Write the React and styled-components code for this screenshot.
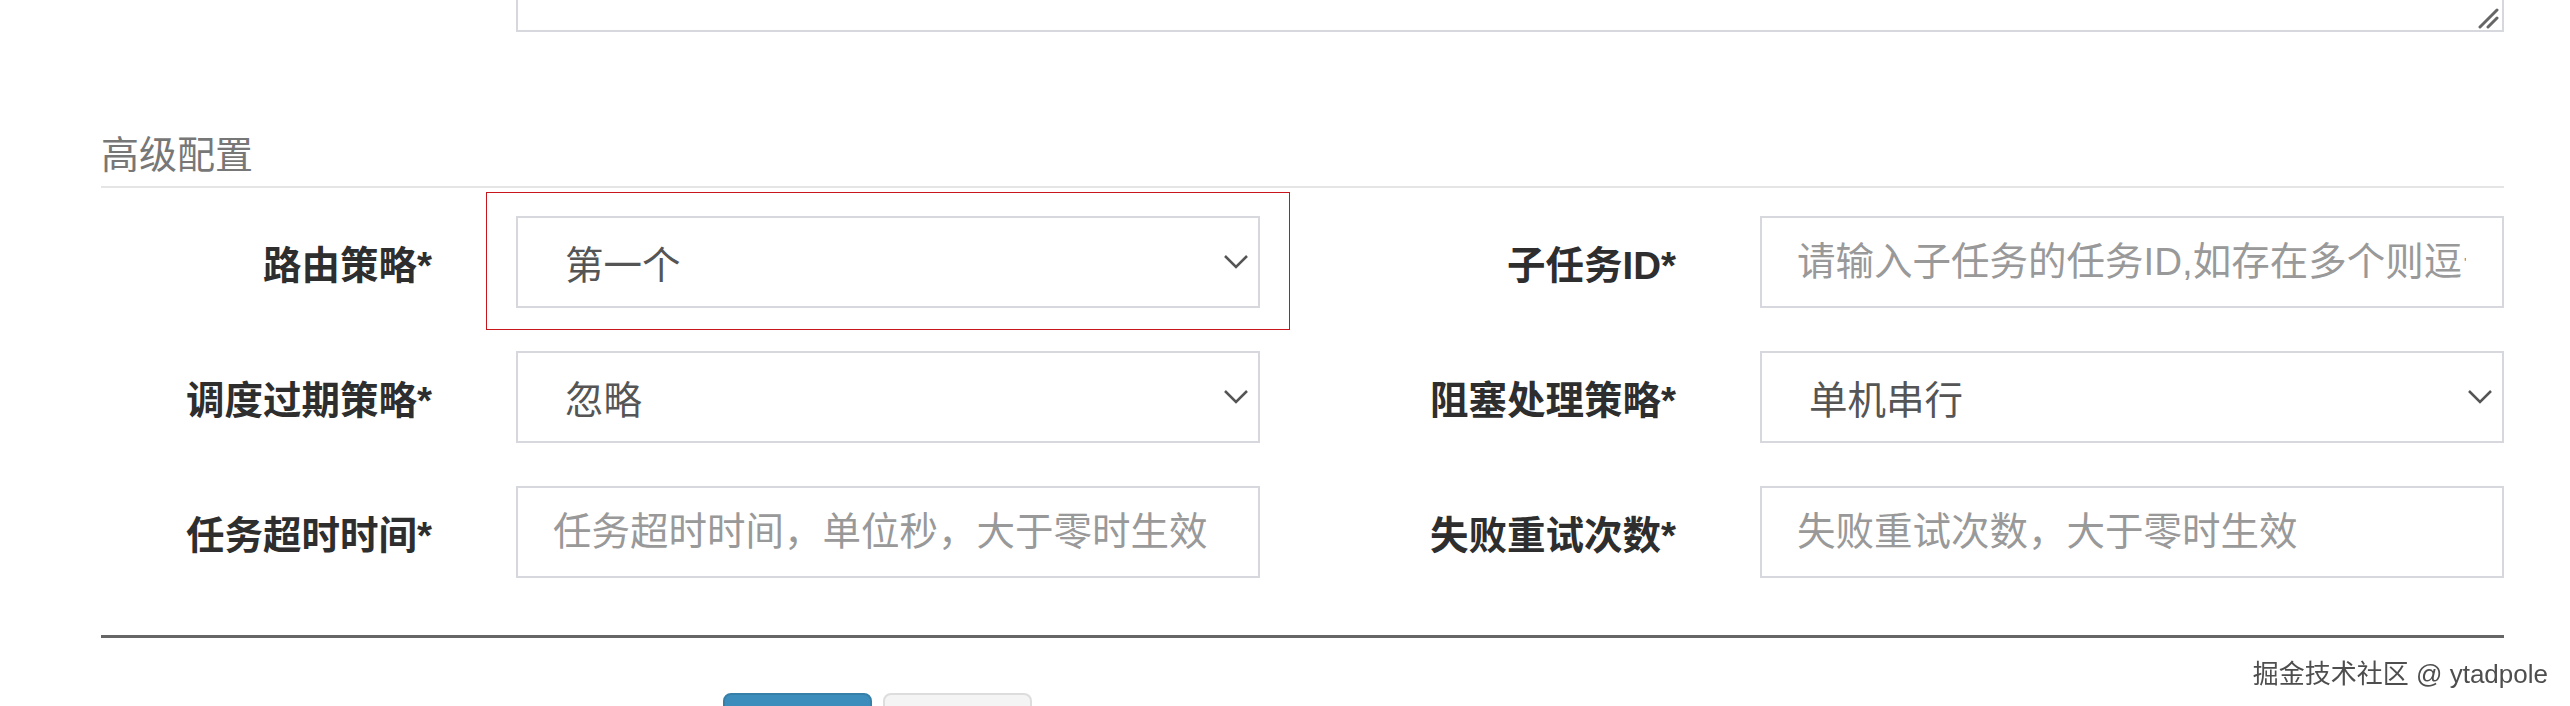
import styled, { createGlobalStyle } from "styled-components";

const GlobalStyle = createGlobalStyle`
  html, body {
    margin: 0;
    padding: 0;
    background: #fff;
    overflow: hidden;
  }
  body {
    font-family: "Liberation Sans", "Noto Sans CJK SC", sans-serif;
    color: #333;
  }
  * { box-sizing: border-box; }
`

const Page = styled.div`
    width: 2403px;
    margin-left: 101px;
    position: relative;
`

const TopRow = styled.div`
    display: grid;
    grid-template-columns: 415px 1988px;
    margin-top: -60px;
`

const AreaWrap = styled.div`
    grid-column: 2;
    position: relative;
    height: 92px;
    textarea{
        width: 100%;
        height: 100%;
        border: 2px solid #d6d8dd;
        resize: none;
        outline: none;
        display: block;
    }
    svg{
        position: absolute;
        right: 5px;
        bottom: 3px;
    }
`

const Legend = styled.div`
    margin-top: 100px;
    font-size: 38px;
    line-height: 46px;
    color: #777;
    padding-bottom: 8px;
    border-bottom: 2px solid #e5e5e5;
`

const FormGrid = styled.div`
    display: grid;
    grid-template-columns: 415px 744px 500px 744px;
    grid-auto-rows: 92px;
    row-gap: 43px;
    margin-top: 28px;
`

const Label = styled.label`
    display: flex;
    align-items: center;
    justify-content: flex-end;
    padding-right: 84px;
    font-size: 38.5px;
    font-weight: bold;
    color: #2e2e2e;
    white-space: nowrap;
`

const Highlight = styled.div`
    position: relative;
    &::after{
        content: "";
        position: absolute;
        top: -24px;
        bottom: -22px;
        left: -30px;
        right: -30px;
        border: 1px solid #c8161d;
        pointer-events: none;
    }
`

const SelectBox = styled.div`
    height: 92px;
    display: flex;
    align-items: center;
    justify-content: space-between;
    padding: 0 9px 0 47px;
    border: 2px solid #d6d8dd;
    background: #fff;
    font-size: 38.5px;
    color: #555;
    white-space: nowrap;
`

const TextInput = styled.input`
    height: 92px;
    width: 100%;
    padding: 0 36px 0 35px;
    border: 2px solid #d6d8dd;
    outline: none;
    font-family: inherit;
    font-size: 38.5px;
    color: #555;
    &::placeholder{
        color: #999;
    }
`

const Divider = styled.div`
    margin-top: 57px;
    border-top: 3px solid #666;
`

const Actions = styled.div`
    display: flex;
    gap: 11px;
    margin-top: 55px;
    padding-left: 622px;
`

const Button = styled.button`
    width: 149px;
    height: 60px;
    border-radius: 8px;
    border: 2px solid ${props => props.$primary ? '#367fa9' : '#ddd'};
    background-color: ${props => props.$primary ? '#3c8dbc' : '#f4f4f4'};
    color: ${props => props.$primary ? '#fff' : '#444'};
`

const Watermark = styled.div`
    position: fixed;
    right: 22px;
    bottom: 16px;
    font-size: 26px;
    color: #4e4e4e;
    text-shadow: 0 0 2px #fff, 0 0 1px #fff;
    white-space: nowrap;
`

const Chevron = () => (
    <svg width="26" height="16" viewBox="0 0 26 16" fill="none">
        <path d="M2 2 L13 13 L24 2" stroke="#555" strokeWidth="2.5" />
    </svg>
)

const Grip = () => (
    <svg width="22" height="22" viewBox="0 0 22 22" fill="none">
        <path d="M3 20 L20 3 M11 20 L20 11" stroke="#666" strokeWidth="3" strokeLinecap="round" />
    </svg>
)

const Select = ({ value }) => (
    <SelectBox>
        <span>{value}</span>
        <Chevron />
    </SelectBox>
)

const App = () => {
  return (
    <>
    <GlobalStyle />
    <Page>
        <TopRow>
            <AreaWrap>
                <textarea />
                <Grip />
            </AreaWrap>
        </TopRow>
        <Legend>高级配置</Legend>
        <FormGrid>
            <Label>路由策略*</Label>
            <Highlight><Select value="第一个" /></Highlight>
            <Label>子任务ID*</Label>
            <TextInput placeholder="请输入子任务的任务ID,如存在多个则逗号分隔" />

            <Label>调度过期策略*</Label>
            <Select value="忽略" />
            <Label>阻塞处理策略*</Label>
            <Select value="单机串行" />

            <Label>任务超时时间*</Label>
            <TextInput placeholder="任务超时时间，单位秒，大于零时生效" />
            <Label>失败重试次数*</Label>
            <TextInput placeholder="失败重试次数，大于零时生效" />
        </FormGrid>
        <Divider />
        <Actions>
            <Button $primary></Button>
            <Button></Button>
        </Actions>
    </Page>
    <Watermark>掘金技术社区 @ ytadpole</Watermark>
    </>
  )
}

export default App
